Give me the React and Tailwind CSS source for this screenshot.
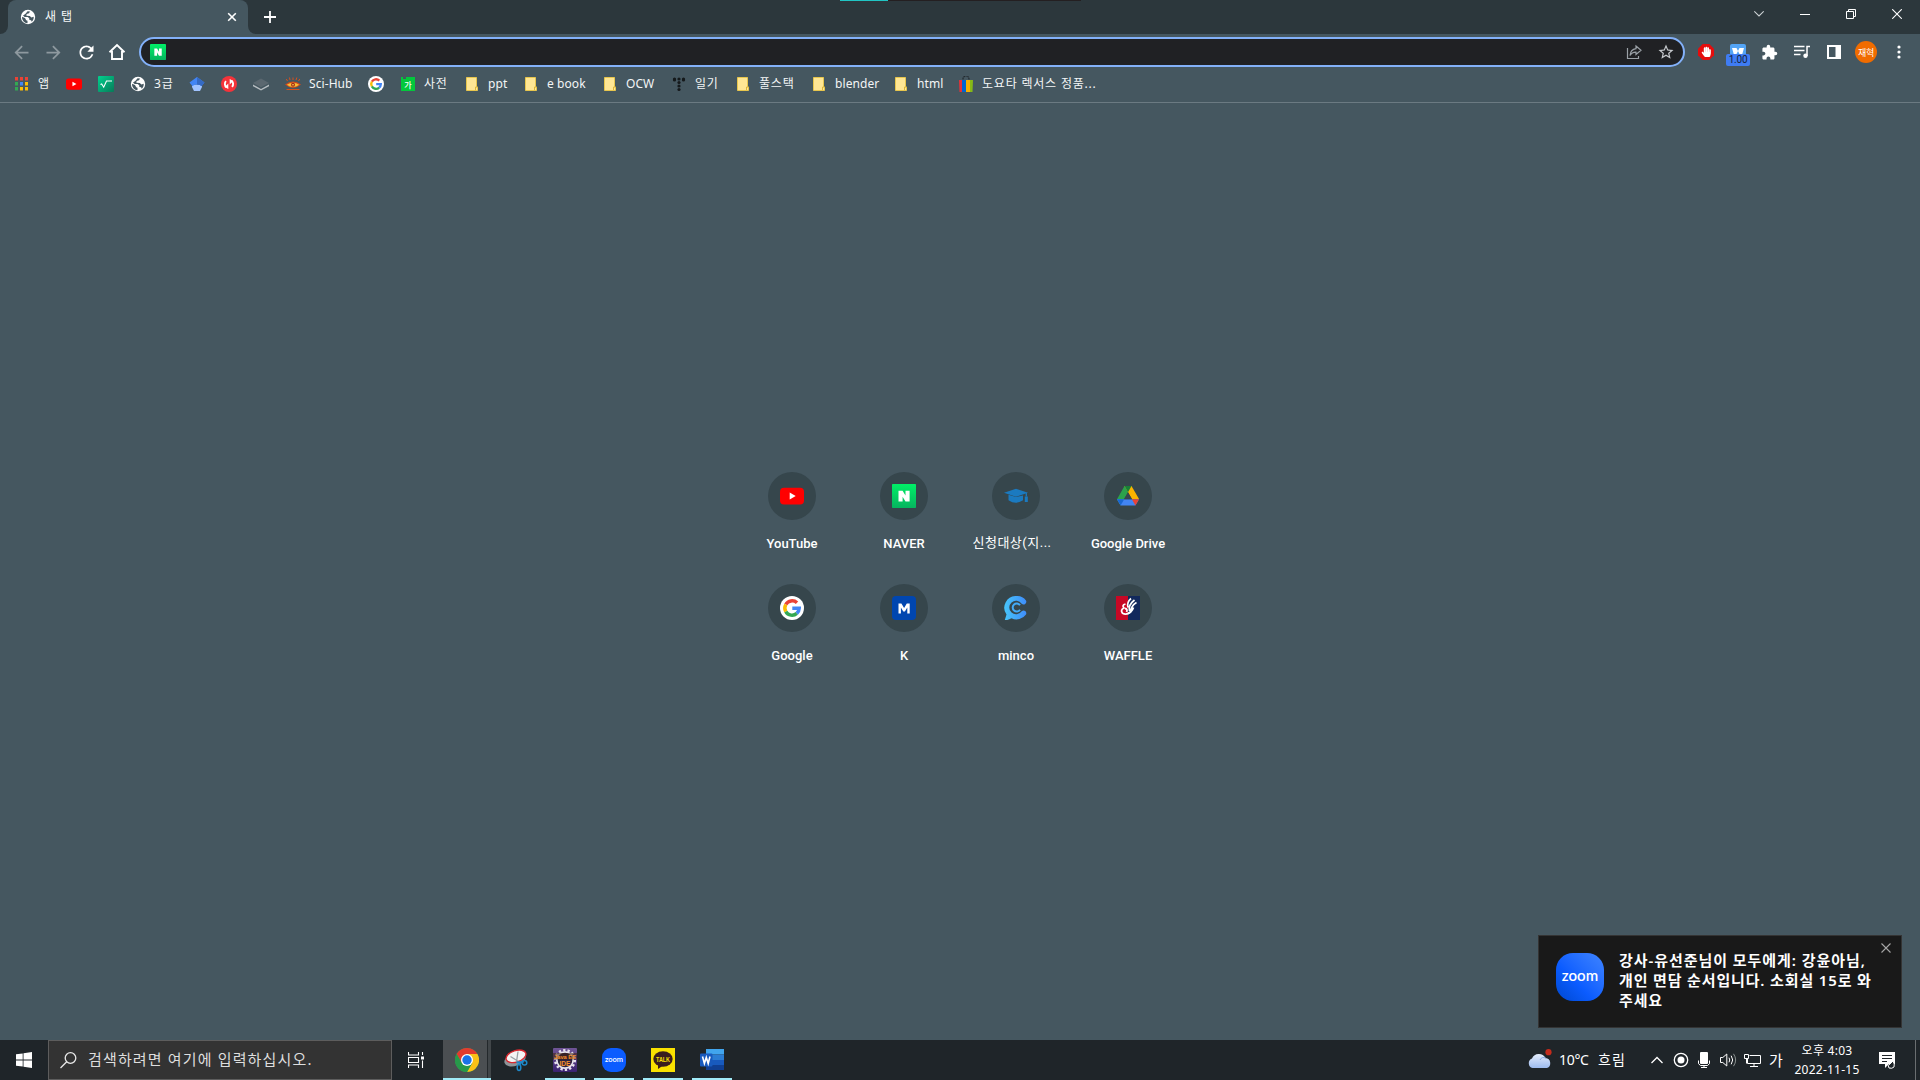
import React from "react";
import { MdArrowBack, MdArrowForward, MdRefresh, MdStarBorder, MdExtension } from "react-icons/md";
import { FaHandPaper } from "react-icons/fa";

const Svg = ({ w = 16, h, vb, className = "", children }) => (
  <svg width={w} height={h || w} viewBox={vb || `0 0 ${w} ${h || w}`} className={`block shrink-0 ${className}`} fill="none">
    {children}
  </svg>
);

const Globe = ({ w = 16 }) => (
  <Svg w={w} vb="0 0 16 16">
    <circle cx="8" cy="8" r="7.2" fill="#fff" />
    <path d="M2 7.8 5 9l1.2 2.2 1.3.6v2.5A6 6 0 0 1 2 7.800z" fill="#455760" />
    <path d="M7.600 2.200 10 2.400l-1 1.800-2.400.8-.2 1.700 3.400.200 1.600 1.500 2.300-.6c.2 2-.6 3.800-2 5l-.6-1.500-1.700-.2-.2-1.900-1.500-1.300-3 .2L3 6.400 5.300 5z" fill="#455760" />
  </Svg>
);

const YouTube = ({ w }) => (
  <Svg w={w} vb="0 0 24 24">
    <rect y="3.700" width="24" height="16.800" rx="4" fill="#f00" />
    <path d="M9.700 8.500v7l6-3.500z" fill="#fff" />
  </Svg>
);

const Naver = ({ w }) => (
  <Svg w={w} vb="0 0 24 24">
    <defs>
      <linearGradient id="nv" x1="0" y1="0" x2="0" y2="1">
        <stop stopColor="#00f067" />
        <stop offset="1" stopColor="#06b45f" />
      </linearGradient>
    </defs>
    <rect width="24" height="24" rx="0.700" fill="url(#nv)" />
    <path d="M6.500 6.800h4.100l2.900 4.700V6.800h4.100v10.700h-4.100l-2.900-4.700v4.700H6.500z" fill="#fff" />
  </Svg>
);

const Google = ({ w }) => (
  <Svg w={w} vb="0 0 24 24">
    <circle cx="12" cy="12" r="12" fill="#fff" />
    <g strokeWidth="3.500">
      <path d="M5.800 8.500A7.200 7.200 0 0 1 17 6.800" stroke="#ea4335" />
      <path d="M5.800 15.600A7.200 7.200 0 0 1 5.800 8.500" stroke="#fbbc05" />
      <path d="M16.800 17.400A7.200 7.200 0 0 1 5.800 15.600" stroke="#34a853" />
      <path d="M12.300 12.300h6.900a7 7 0 0 1-2.400 5.100" stroke="#4285f4" />
    </g>
  </Svg>
);

const Folder = () => (
  <Svg>
    <path d="M2.500 1.500h10v9.500h1v3.500h-11z" fill="#ffe694" stroke="#e8c64d" />
    <path d="M11.500 14v-3h2" stroke="#dcb53a" />
  </Svg>
);

const AppsGrid = () => (
  <Svg>
    {["#ea4335", "#ea4335", "#ea4335", "#34a853", "#4285f4", "#fbbc05", "#34a853", "#fbbc05", "#fbbc05"].map((c, i) => (
      <rect key={i} x={1 + (i % 3) * 5} y={1 + Math.floor(i / 3) * 5} width="3" height="3.500" fill={c} />
    ))}
  </Svg>
);

const Root = () => (
  <Svg>
    <defs>
      <linearGradient id="rt" x1="0" y1="0" x2="1" y2="1">
        <stop stopColor="#00d28f" />
        <stop offset="1" stopColor="#087a58" />
      </linearGradient>
    </defs>
    <rect width="16" height="16" rx="1" fill="url(#rt)" />
    <path d="M2.500 8.500l1.200-.500 2 3.200L8.500 5H14" stroke="#fff" strokeWidth="1.100" />
  </Svg>
);

const Scholar = () => (
  <Svg>
    <path d="M3 8.500v2.500l2 4h6l2-4V8.500z" fill="#a0c3ff" />
    <path d="M8 1 15.500 6.500l-3 3.700Q11.500 8.500 8 8.500T3.500 10.200L.5 6.500z" fill="#4285f4" />
    <path d="M8 1 15.500 6.500l-3 3.700Q11.500 8.500 8 8.500z" fill="#356ac3" />
  </Svg>
);

const RedSync = () => (
  <Svg>
    <circle cx="8" cy="8" r="8" fill="#f5333a" />
    <path d="M5.500 11.200A4 4 0 0 1 5 5.200" stroke="#fff" strokeWidth="1.900" />
    <path d="M10.500 4.800A4 4 0 0 1 11 10.800" stroke="#fff" strokeWidth="1.900" />
    <path d="M7.300 7.500v5.500L3.800 11zM8.700 8.500V3l3.500 2z" fill="#fff" />
  </Svg>
);

const Stack = () => (
  <Svg>
    <path d="M8 2.500 16 7l-8 4.300L0 7z" fill="#5b6870" />
    <path d="M0 8.500 8 13l8-4.500v1.700L8 14.500 0 10.200z" fill="#b6bdc1" />
  </Svg>
);

const SciHub = () => (
  <Svg>
    <path d="M0 8.500Q8 2.500 16 8.500 8 15.500 0 8.500z" fill="#cf4a1c" />
    <path d="M1.800 8.800Q8 4.500 14.200 8.800 8 13.300 1.800 8.800z" fill="#f6bd35" />
    <circle cx="8" cy="8.800" r="2" fill="#a52814" />
    <circle cx="8" cy="8.800" r=".800" fill="#ffe16a" />
    <path d="M2.500 5 1.300 3M5 4 4.500 1.500M8 4V1.500M11 4l.8-2.500M13.500 5l1.300-2M1.500 13.500h13" stroke="#d6501d" />
  </Svg>
);

const Dict = () => (
  <Svg>
    <path d="M1 1h2v2h3V1h9v14H1z" fill="#03c83c" />
    <text x="4.300" y="11.800" fontSize="8" fontWeight="500" fill="#fff" fontFamily="Noto Sans CJK KR, sans-serif">가</text>
  </Svg>
);

const Dots = () => (
  <Svg>
    <g fill="#15191b">
      {[[3.500, 3], [8, 3], [12.500, 3], [3.500, 4], [12.500, 4], [8, 6.500], [8, 10], [8, 13.500]].map(([x, y], i) => (
        <circle key={i} cx={x} cy={y} r="1.600" />
      ))}
    </g>
  </Svg>
);

const Bag = () => (
  <Svg>
    <path d="M5 5V3a3 3 0 0 1 6 0v2" stroke="#22292d" strokeWidth="1.200" strokeDasharray="1.500 .5" />
    <path d="M1 4h4v12H1.500z" fill="#e53238" />
    <path d="M4 4h4v12H4z" fill="#0064d2" />
    <path d="M8 4h4v12H8z" fill="#f5af02" />
    <path d="M12 4h3l-.500 12H12z" fill="#86b817" />
  </Svg>
);

const bookmarks = [
  ["w-[52px]", AppsGrid, "앱"],
  ["w-8", () => <YouTube w={16} />],
  ["w-8", Root],
  ["w-[59px]", Globe, "3급"],
  ["w-8", Scholar],
  ["w-8", RedSync],
  ["w-8", Stack],
  ["w-[83px]", SciHub, "Sci-Hub"],
  ["w-8", () => <Google w={16} />],
  ["w-16", Dict, "사전"],
  ["w-[59px]", Folder, "ppt"],
  ["w-[79px]", Folder, "e book"],
  ["w-[69px]", Folder, "OCW"],
  ["w-16", Dots, "일기"],
  ["w-[76px]", Folder, "풀스택"],
  ["w-[82px]", Folder, "blender"],
  ["w-[65px]", Folder, "html"],
  ["w-[150px]", Bag, "도요타 렉서스 정품..."],
];

const Cap = () => (
  <Svg w={24}>
    <path d="M0 8.700 12 4.800l12 3.900-12 4z" fill="#1b7ac0" />
    <path d="M4.500 10.800 12 13l7-1.500v4.700q-7 5-14.500 0z" fill="#1b7ac0" />
    <path d="M22.300 9v3.500" stroke="#1b7ac0" strokeWidth="1.300" />
    <path d="M20.800 12.500h3v5.500h-3z" fill="#1b7ac0" />
  </Svg>
);

const Drive = () => (
  <Svg w={24}>
    <path d="M8.500 2h7l-7.300 12.700L4.600 21.500 1 15.300z" fill="#2ba24c" />
    <path d="M8.500 2h7l7.500 13h-7z" fill="#fbb300" />
    <path d="M8.500 2h7L12 8.300z" fill="#188038" />
    <path d="M1 15.300h22l-3.600 6.200H4.600z" fill="#4285f4" />
    <path d="M1 15.300h7.200l-3.600 6.200z" fill="#1967d2" />
    <path d="M15.900 15.300H23l-3.600 6.200z" fill="#ea4335" />
    <path d="M12 8.500l3.900 6.800H8.100z" fill="#36464c" />
  </Svg>
);

const MBadge = () => (
  <Svg w={24}>
    <rect width="24" height="24" rx="4" fill="#0046b0" />
    <path d="M6.500 17.500v-10h2.900l2.700 4.600 2.700-4.600h2.900v10h-2.400v-6l-2.400 4h-1.600l-2.400-4v6z" fill="#fff" />
  </Svg>
);

const Minco = () => (
  <Svg w={24}>
    <defs>
      <linearGradient id="mc">
        <stop stopColor="#47c5fa" />
        <stop offset="1" stopColor="#3f8dfa" />
      </linearGradient>
    </defs>
    <path d="M12.500 0A11.400 11.400 0 0 1 22 4.500q1 2-.800 3.500-2 1.200-3.500-.3A6.800 6.800 0 1 0 17.700 15.300q1.800-1.500 3.500-.3 1.700 1.500.8 3.500A11.500 11.500 0 0 1 7.500 22.300Q4 24.500.8 24L2.500 18.500A11.700 11.700 0 0 1 12.500 0z" fill="url(#mc)" />
    <path d="M16 9.200A4 4 0 1 0 16 13.700" stroke="#43abf8" strokeWidth="2" />
  </Svg>
);

const Waffle = () => (
  <Svg w={24}>
    <path d="M0 0h12v24H0z" fill="#c70825" />
    <path d="M12 0h12v24H12z" fill="#12295c" />
    <path d="M9.500 8Q5.500 9 8 12 4 14 6.500 17.200q4 2.300 8-1.200M9 12.500q3 .5 1.500 3.500" stroke="#fff" strokeWidth="1.800" />
    <path d="M12 11.500Q10.500 6.500 15 2.500M13.500 15Q12 9 18.500 4M14.500 17Q14.500 10 20.500 6.500M12 17.500q4-1.500 5.500-6" stroke="#fff" strokeWidth="1.700" />
  </Svg>
);

const tiles = [
  ["YouTube", <YouTube w={24} />],
  ["NAVER", <Naver w={24} />],
  ["신청대상(지...", <Cap />, true],
  ["Google Drive", <Drive />],
  ["Google", <Google w={24} />],
  ["K", <MBadge />],
  ["minco", <Minco />],
  ["WAFFLE", <Waffle />],
];

const ZoomLogo = ({ big }) => (
  <div
    className={
      big
        ? "flex size-12 shrink-0 items-center justify-center rounded-[17px] bg-linear-to-tr from-[#0048cf] via-[#0b5cff] via-40% to-[#3f84ff] pb-[3px] font-[Lato] text-[15px] leading-none font-semibold text-white"
        : "flex size-6 items-center justify-center rounded-[9px] bg-[#0b5cff] pb-px font-[Lato] text-[7.500px] leading-none font-semibold text-white"
    }
  >
    zoom
  </div>
);

const Chrome = () => (
  <Svg w={24}>
    <circle cx="12" cy="12" r="12" fill="#34a853" />
    <path d="M1.600 6A12 12 0 0 1 22.400 6H12l-5.200 9z" fill="#e33b2e" />
    <path d="M22.400 6A12 12 0 0 1 12 24l5.200-9L12 6z" fill="#fbc116" />
    <path d="M1.600 6 6.800 15 12 18l5.200-3L12 24A12 12 0 0 1 1.600 6z" fill="#27994a" />
    <circle cx="12" cy="12" r="6" fill="#fff" />
    <circle cx="12" cy="12" r="4.700" fill="#1a73e8" />
  </Svg>
);

const Snip = () => (
  <Svg w={24}>
    <ellipse cx="11" cy="11.500" rx="11" ry="6.300" transform="rotate(-18 11 11.500)" fill="#8d9498" />
    <ellipse cx="12" cy="8.300" rx="10.300" ry="5.700" transform="rotate(-18 12 8.300)" fill="#f4f4f4" stroke="#d9282f" strokeWidth="1.400" />
    <path d="M14 3.500 12.500 14M6.500 8.500l8 5" stroke="#9aa1a5" strokeWidth="1.300" />
    <path d="M12.500 14.500 19.500 14" stroke="#1e88c9" strokeWidth="2" />
    <circle cx="20.500" cy="14.800" r="2.300" stroke="#1e88c9" strokeWidth="1.500" />
    <ellipse cx="15" cy="19.500" rx="1.800" ry="3" stroke="#1e88c9" strokeWidth="1.500" />
    <path d="M15.500 17l1.500-3" stroke="#1e88c9" strokeWidth="1.700" />
  </Svg>
);

const JavaEE = () => (
  <Svg w={24}>
    <defs>
      <linearGradient id="je" x1="0" y1="0" x2="0" y2="1">
        <stop stopColor="#6f5596" />
        <stop offset="1" stopColor="#3a2270" />
      </linearGradient>
    </defs>
    <rect width="24" height="24" rx="1" fill="url(#je)" />
    <circle cx="12" cy="12" r="9.800" stroke="#e8e4ee" strokeWidth="2.500" strokeDasharray="2.300 2.100" />
    <circle cx="12" cy="12" r="8.200" fill="#2c2340" stroke="#e8e4ee" strokeWidth="1.700" />
    <path d="M0 5h24v6.500H0z" fill="#43220f" opacity=".55" />
    <g fill="#f7902a" fontFamily="Liberation Sans, sans-serif" fontWeight="700">
      <text x="1" y="11" fontSize="6" textLength="22" lengthAdjust="spacingAndGlyphs">Java EE</text>
      <text x="6.500" y="17.800" fontSize="7" textLength="11" lengthAdjust="spacingAndGlyphs">IDE</text>
    </g>
  </Svg>
);

const Talk = () => (
  <Svg w={24}>
    <rect width="24" height="24" fill="#fae100" />
    <ellipse cx="12" cy="11" rx="9.700" ry="7.700" fill="#3a1d1e" />
    <path d="M7 16v5l5-3.500z" fill="#3a1d1e" />
    <text x="5" y="13.500" fontSize="6.500" textLength="14" lengthAdjust="spacingAndGlyphs" fontWeight="900" fill="#fae100" fontFamily="Liberation Sans, sans-serif">TALK</text>
  </Svg>
);

const Word = () => (
  <Svg w={24}>
    <path d="M6 1h18v5.500H6z" fill="#41a5ee" />
    <path d="M6 6.500h18V12H6z" fill="#2b7cd3" />
    <path d="M6 12h18v5H6z" fill="#185abd" />
    <path d="M6 17h18v5H6z" fill="#103f91" />
    <rect y="5.500" width="12.500" height="13" rx="1" fill="#185abd" />
    <path d="M2.500 8.500 4.400 15.500 6.300 9.500 8.200 15.500 10 8.500" stroke="#fff" strokeWidth="1.600" />
  </Svg>
);

const apps = [
  [<Snip />, false],
  [<JavaEE />, true],
  [<ZoomLogo />, true],
  [<Talk />, true],
  [<Word />, true],
];

const TabStrip = () => (
  <header className="relative flex h-[34px] bg-[#2c373c]">
    <div className="absolute top-0 left-[840px] flex h-px">
      <div className="w-12 bg-[#21c5c4]" />
      <div className="w-[193px] bg-[#241f21]" />
    </div>
    <div className="flex w-2 bg-[#455760]">
      <div className="w-2 rounded-br-lg bg-[#2c373c]" />
    </div>
    <div className="flex w-60 items-center rounded-t-lg bg-[#455760] pl-3">
      <Globe />
      <span className="ml-[9px] flex-1 text-[12px] tracking-[0.9px] text-[#f4f6f7]">새 탭</span>
      <Svg w={16} className="mr-2">
        <path d="M4.200 4.200l7.600 7.600M11.800 4.200l-7.600 7.600" stroke="#fff" strokeWidth="1.600" />
      </Svg>
    </div>
    <div className="flex w-2 bg-[#455760]">
      <div className="w-2 rounded-bl-lg bg-[#2c373c]" />
    </div>
    <Svg w={12} className="mt-[11px] ml-2">
      <path d="M6 0v12M0 6h12" stroke="#fff" strokeWidth="1.800" />
    </Svg>
    <div className="mt-[9px] mr-[18px] ml-auto flex gap-9">
      <Svg w={10}><path d="M.3 2.300 5 7l4.700-4.700" stroke="#ccd1d4" strokeWidth="1.100" /></Svg>
      <Svg w={10}><path d="M0 5.500h10" stroke="#fff" /></Svg>
      <Svg w={10}><path d="M.5 2.500h7v7h-7zM2.500 2.500v-2h7v7h-2" stroke="#fff" /></Svg>
      <Svg w={10}><path d="M.2.200l9.600 9.600M9.800.2.200 9.800" stroke="#fff" strokeWidth="1.100" /></Svg>
    </div>
  </header>
);

const Toolbar = () => (
  <div className="flex h-9 items-center">
    <div className="ml-[11px] flex w-32 items-center gap-[11px]">
      <MdArrowBack size={21} color="#8e999f" />
      <MdArrowForward size={21} color="#8e999f" />
      <MdRefresh size={21} color="#fff" className="ml-px" />
      <Svg w={18}><path d="M1.500 9.300 9 2l7.500 7.300M4 8v8h10V8" stroke="#fff" strokeWidth="1.900" /></Svg>
    </div>
    <div className="flex h-[30px] w-[1546px] items-center rounded-full border-2 border-[#83b1f9] bg-[#202124] pl-[9px]">
      <Naver w={16} />
      <Svg w={16} className="mr-[15px] ml-auto">
        <path d="M1.500 4v10.500h11V12" stroke="#9aa0a6" strokeWidth="1.200" />
        <path d="M10 2l5 4.300-5 4.200V8.200Q6 8 4 11.500 4.500 5.500 10 4.700z" stroke="#9aa0a6" strokeWidth="1.200" />
      </Svg>
      <MdStarBorder size={18} color="#c7cace" className="mr-2" />
    </div>
    <div className="ml-[13px] flex size-4 items-center justify-center">
      <Svg w={16}>
        <path d="M4.700 0h6.600L16 4.700v6.600L11.300 16H4.700L0 11.300V4.700z" fill="#e40d0d" />
        <FaHandPaper x="3" y="2.500" size={10.500} color="#fff" />
      </Svg>
    </div>
    <div className="relative ml-4">
      <Svg w={16}>
        <rect width="16" height="16" rx="2" fill="#53a4f5" />
        <path d="M2 4h4.500L8 7l1.500-3H14l-2 7H4z" fill="#fff" />
        <path d="M6.500 10 8 7l1.500 3z" fill="#53a4f5" />
      </Svg>
      <span className="absolute top-2.5 -left-1 flex h-3 w-6 items-center justify-center rounded-[2px] bg-[#3f7cf3] pb-px font-[Roboto] text-[10px] leading-none tracking-[-0.2px] text-[#14223c]">1.00</span>
    </div>
    <MdExtension size={17} color="#fff" className="ml-[15px]" />
    <Svg w={16} className="ml-4">
      <path d="M0 2.500h10.500M0 6.500h10.500M0 10.500h6.500M13 12V2.500h3" stroke="#fff" strokeWidth="1.500" />
      <circle cx="11.500" cy="11.800" r="2.200" fill="#fff" />
    </Svg>
    <Svg w={14} className="ml-[17px]">
      <path d="M0 0h14v14H0zM2 2v10h6.500V2z" fill="#fff" fillRule="evenodd" />
    </Svg>
    <span className="ml-3.5 flex size-[22px] items-center justify-center rounded-full bg-[#f06c00] text-[9px] leading-none tracking-[-0.2px] text-white">재혁</span>
    <Svg w={4} h={14} className="ml-5">
      <g fill="#fff"><circle cx="2" cy="2" r="1.600" /><circle cx="2" cy="7" r="1.600" /><circle cx="2" cy="12" r="1.600" /></g>
    </Svg>
  </div>
);

const Tray = () => (
  <div className="ml-auto flex h-full items-center text-white">
    <Svg w={26} h={22}>
      <defs>
        <linearGradient id="cl" x1="0" y1="0" x2="0" y2="1">
          <stop stopColor="#e4edfc" />
          <stop offset="1" stopColor="#9dbbee" />
        </linearGradient>
      </defs>
      <path d="M5.500 19a5 5 0 0 1-.500-9.500A7.500 7.500 0 0 1 18.500 9 5.200 5.200 0 0 1 20 19z" fill="url(#cl)" />
      <path d="M13 11q2-4 6-1.700" stroke="#86a8e4" />
      <circle cx="21.500" cy="3.200" r="3.100" fill="#c42b1c" />
    </Svg>
    <span className="mb-0.5 ml-[6px] w-[39px] text-[14px] tracking-[-0.3px] whitespace-nowrap">10°C</span>
    <span className="mb-0.5 w-[53px] text-[14px] tracking-[1px] whitespace-nowrap">흐림</span>
    <Svg w={12}><path d="M.5 9 6 3.500 11.500 9" stroke="#fff" strokeWidth="1.300" /></Svg>
    <Svg w={16} className="ml-2.5">
      <circle cx="8" cy="8" r="6.700" stroke="#fff" strokeWidth="1.300" />
      <circle cx="8" cy="8" r="3.500" fill="#fff" />
    </Svg>
    <Svg w={12} h={16} className="ml-[9px]">
      <rect x="2" y="0" width="8" height="12" rx="1" fill="#fff" />
      <path d="M.5 8.500v3.200l2 1.800h7l2-1.800V8.500M6 13v2.500M3 15.500h6" stroke="#fff" />
    </Svg>
    <Svg w={17} h={16} className="ml-2.5">
      <path d="M.5 5.500h2.300l4-3.500v12l-4-3.500H.500z" stroke="#fff" />
      <path d="M9 5.700q1.500 2.300 0 4.600M11.200 3.700q3 4.300 0 8.600" stroke="#fff" />
      <path d="M13.500 1.800q4.300 6.200 0 12.400" stroke="#89908f" />
    </Svg>
    <Svg w={17} h={16} className="ml-[7px]">
      <path d="M5.500 3.500h11v8h-13V7M10 11.500v3M6 14.500h8" stroke="#fff" />
      <path d="M.5 2.500h4v4h-4zM2.500 6.500v5" stroke="#fff" />
    </Svg>
    <span className="ml-2 w-4 text-[15px]">가</span>
    <div className="mb-px ml-[7px] flex w-[70px] flex-col items-center text-[12px] leading-[19px] tracking-[0.25px] whitespace-nowrap">
      <span>오후 4:03</span>
      <span>2022-11-15</span>
    </div>
    <Svg w={17} className="ml-[17px]">
      <path d="M0 0h16v12h-6l-4 4v-4H0z" fill="#fff" />
      <path d="M3 3.500h10M3 6.500h10M3 9.500h5" stroke="#1f2529" />
      <path d="M10 16q-2-3 1-4l3-3q2 3 1 6-2 2-5 1z" fill="#1f2529" stroke="#fff" />
    </Svg>
    <div className="ml-[19px] h-full w-px bg-[#6a6e70]" />
    <div className="w-1" />
  </div>
);

const Taskbar = () => (
  <footer className="flex h-10 items-center bg-[#1f2529]">
    <div className="flex w-12 justify-center">
      <Svg w={16}>
        <path d="M0 2.300 6.700 1.400v6.100H0zM7.500 1.300 16 0v7.500H7.500zM0 8.400h6.700v6.200L0 13.700zM7.500 8.400H16V16l-8.500-1.200z" fill="#fff" />
      </Svg>
    </div>
    <div className="flex h-full w-[344px] items-center border border-[#5d5d5d] bg-[#333] pl-[11px]">
      <Svg w={17}>
        <circle cx="10.500" cy="6" r="5.300" stroke="#e8e8e8" strokeWidth="1.300" />
        <path d="M6.700 9.800.500 16" stroke="#e8e8e8" strokeWidth="1.300" />
      </Svg>
      <span className="mb-px ml-[11px] text-[15px] tracking-[1.150px] text-[#dedede]">검색하려면 여기에 입력하십시오.</span>
    </div>
    <Svg w={17} className="ml-4">
      <path d="M.5 0v3h10V0M.5 16v-3h10v3M.5 5.500h10v5H.500zM14.500 0v3M14.500 8.500V16" stroke="#fff" strokeWidth="1.100" />
      <path d="M13 4.500h3v3h-3z" fill="#fff" />
    </Svg>
    <div className="ml-[18px] flex h-full w-12 flex-col">
      <div className="flex flex-1">
        <div className="flex w-11 items-center justify-center bg-[#4b4f52] pt-0.5 pl-1"><Chrome /></div>
        <div className="w-px bg-[#24292c]" />
        <div className="flex-1 bg-[#414649]" />
      </div>
      <div className="h-0.5 bg-[#a1ebf8]" />
    </div>
    <div className="ml-px flex h-full gap-px">
      {apps.map(([icon, open], i) => (
        <div key={i} className="flex w-12 flex-col items-center">
          <div className="flex flex-1 items-center pt-0.5">{icon}</div>
          <div className={open ? "h-0.5 w-10 bg-[#a1ebf8]" : "h-0.5"} />
        </div>
      ))}
    </div>
    <Tray />
  </footer>
);

export default function App() {
  return (
    <div className="flex h-[1080px] w-[1920px] flex-col overflow-hidden bg-[#455760] font-['Noto_Sans','Noto_Sans_CJK_KR',sans-serif]">
      <TabStrip />
      <Toolbar />
      <nav className="flex h-[33px] border-b border-[#6b7a82] pl-3.5">
        {bookmarks.map(([w, Icon, label], i) => (
          <div key={i} className={`flex h-7 shrink-0 items-center gap-2 ${w}`}>
            <Icon />
            {label && (
              <span className={`text-[12px] whitespace-nowrap text-[#f3f5f6] ${/[가-힣]/.test(label) ? "tracking-[0.8px]" : "tracking-[0.08px]"}`}>
                {label}
              </span>
            )}
          </div>
        ))}
      </nav>
      <main className="flex flex-1 flex-col">
        <div className="mx-auto mt-[369px] grid w-[448px] grid-cols-4">
          {tiles.map(([label, icon, korean]) => (
            <div key={label} className="flex h-28 flex-col items-center">
              <div className="flex size-12 items-center justify-center rounded-full bg-[#36464c]">{icon}</div>
              <span
                className={
                  korean
                    ? "mt-[13px] mr-2 font-[Roboto,'Noto_Sans_CJK_KR',sans-serif] text-[13px] leading-5 tracking-[0.5px] whitespace-nowrap text-white"
                    : "mt-3.5 font-[Roboto,sans-serif] text-[13px] leading-5 font-medium whitespace-nowrap text-white"
                }
              >
                {label}
              </span>
            </div>
          ))}
        </div>
        <aside className="relative mt-auto mr-[18px] mb-3 flex h-[93px] w-[364px] self-end border border-[#343434] bg-[#191919] pt-[17px] pl-[17px]">
          <ZoomLogo big />
          <p className="-mt-[3px] ml-[15px] text-[15px] leading-5 font-semibold tracking-[0.85px] whitespace-nowrap text-white">
            <span className="tracking-[0.95px]">강사-유선준님이 모두에게: 강윤아님,</span>
            <br />
            개인 면담 순서입니다. 소회실 15로 와
            <br />
            주세요
          </p>
          <Svg w={10} className="absolute top-[7px] right-2.5">
            <path d="M.5.500l9 9M9.500.500l-9 9" stroke="#a6a6a6" strokeWidth="1.100" />
          </Svg>
        </aside>
      </main>
      <Taskbar />
    </div>
  );
}
